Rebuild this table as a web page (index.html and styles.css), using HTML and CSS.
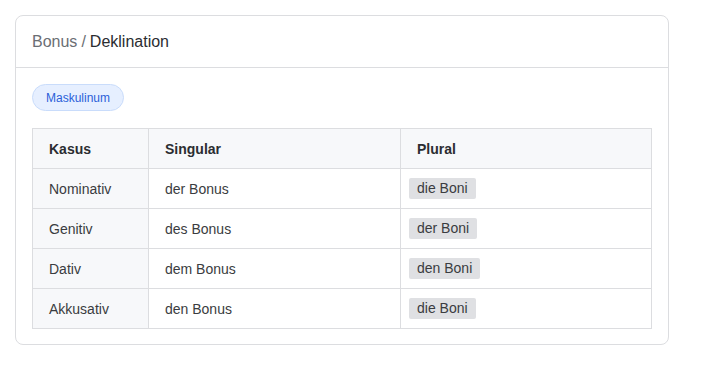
FILE: index.html
```html
<!DOCTYPE html>
<html lang="de">
<head>
<meta charset="utf-8">
<link rel="stylesheet" href="styles.css">
</head>
<body>
<div class="card">
  <div class="card-header">
    <span class="crumb-muted">Bonus</span> <span class="crumb-muted">/</span> <span class="crumb-current">Deklination</span>
  </div>
  <div class="card-body">
    <span class="badge">Maskulinum</span>
    <table class="decl">
      <colgroup><col class="c1"><col class="c2"><col class="c3"></colgroup>
      <thead>
        <tr><th>Kasus</th><th>Singular</th><th>Plural</th></tr>
      </thead>
      <tbody>
        <tr><td class="case">Nominativ</td><td>der Bonus</td><td><span class="chip">die Boni</span></td></tr>
        <tr><td class="case">Genitiv</td><td>des Bonus</td><td><span class="chip">der Boni</span></td></tr>
        <tr><td class="case">Dativ</td><td>dem Bonus</td><td><span class="chip">den Boni</span></td></tr>
        <tr><td class="case">Akkusativ</td><td>den Bonus</td><td><span class="chip">die Boni</span></td></tr>
      </tbody>
    </table>
  </div>
</div>
</body>
</html>
```
FILE: styles.css
```css
* { box-sizing: border-box; }
body {
  margin: 0;
  padding: 15px;
  background: #fff;
  font-family: "Liberation Sans", Arial, sans-serif;
  color: #333;
}
.card {
  width: 654px;
  border: 1px solid #dcdde0;
  border-radius: 8px;
  background: #fff;
}
.card-header {
  height: 52px;
  padding: 1px 16px 0;
  display: flex;
  align-items: center;
  gap: 4px;
  border-bottom: 1px solid #dcdde0;
  font-size: 16px;
}
.crumb-muted { color: #6b6e74; }
.crumb-current { color: #2b2d31; }
.card-body {
  padding: 16px 16px 15px;
}
.badge {
  display: inline-flex;
  align-items: center;
  height: 27px;
  padding: 0 13px;
  border-radius: 14px;
  background: #e6efff;
  border: 1px solid #c9dcfb;
  color: #2b5fd9;
  font-size: 12px;
}
.decl {
  margin-top: 17px;
  width: 619px;
  border-collapse: collapse;
  table-layout: fixed;
  font-size: 14px;
}
.c1 { width: 116px; }
.c2 { width: 252px; }
.c3 { width: 251px; }
.decl th, .decl td {
  border: 1px solid #dcdde0;
  height: 40px;
  padding: 0 16px;
  text-align: left;
  vertical-align: middle;
}
.decl th {
  background: #f7f8fa;
  font-weight: bold;
  color: #2b2d31;
}
.decl td { color: #3a3c40; }
.decl td.case { background: #f7f8fa; }
.decl td:last-child { padding-left: 8px; }
.chip {
  display: inline-block;
  background: #dfe0e3;
  padding: 2px 8px;
  line-height: 17px;
  border-radius: 2px;
}
```
